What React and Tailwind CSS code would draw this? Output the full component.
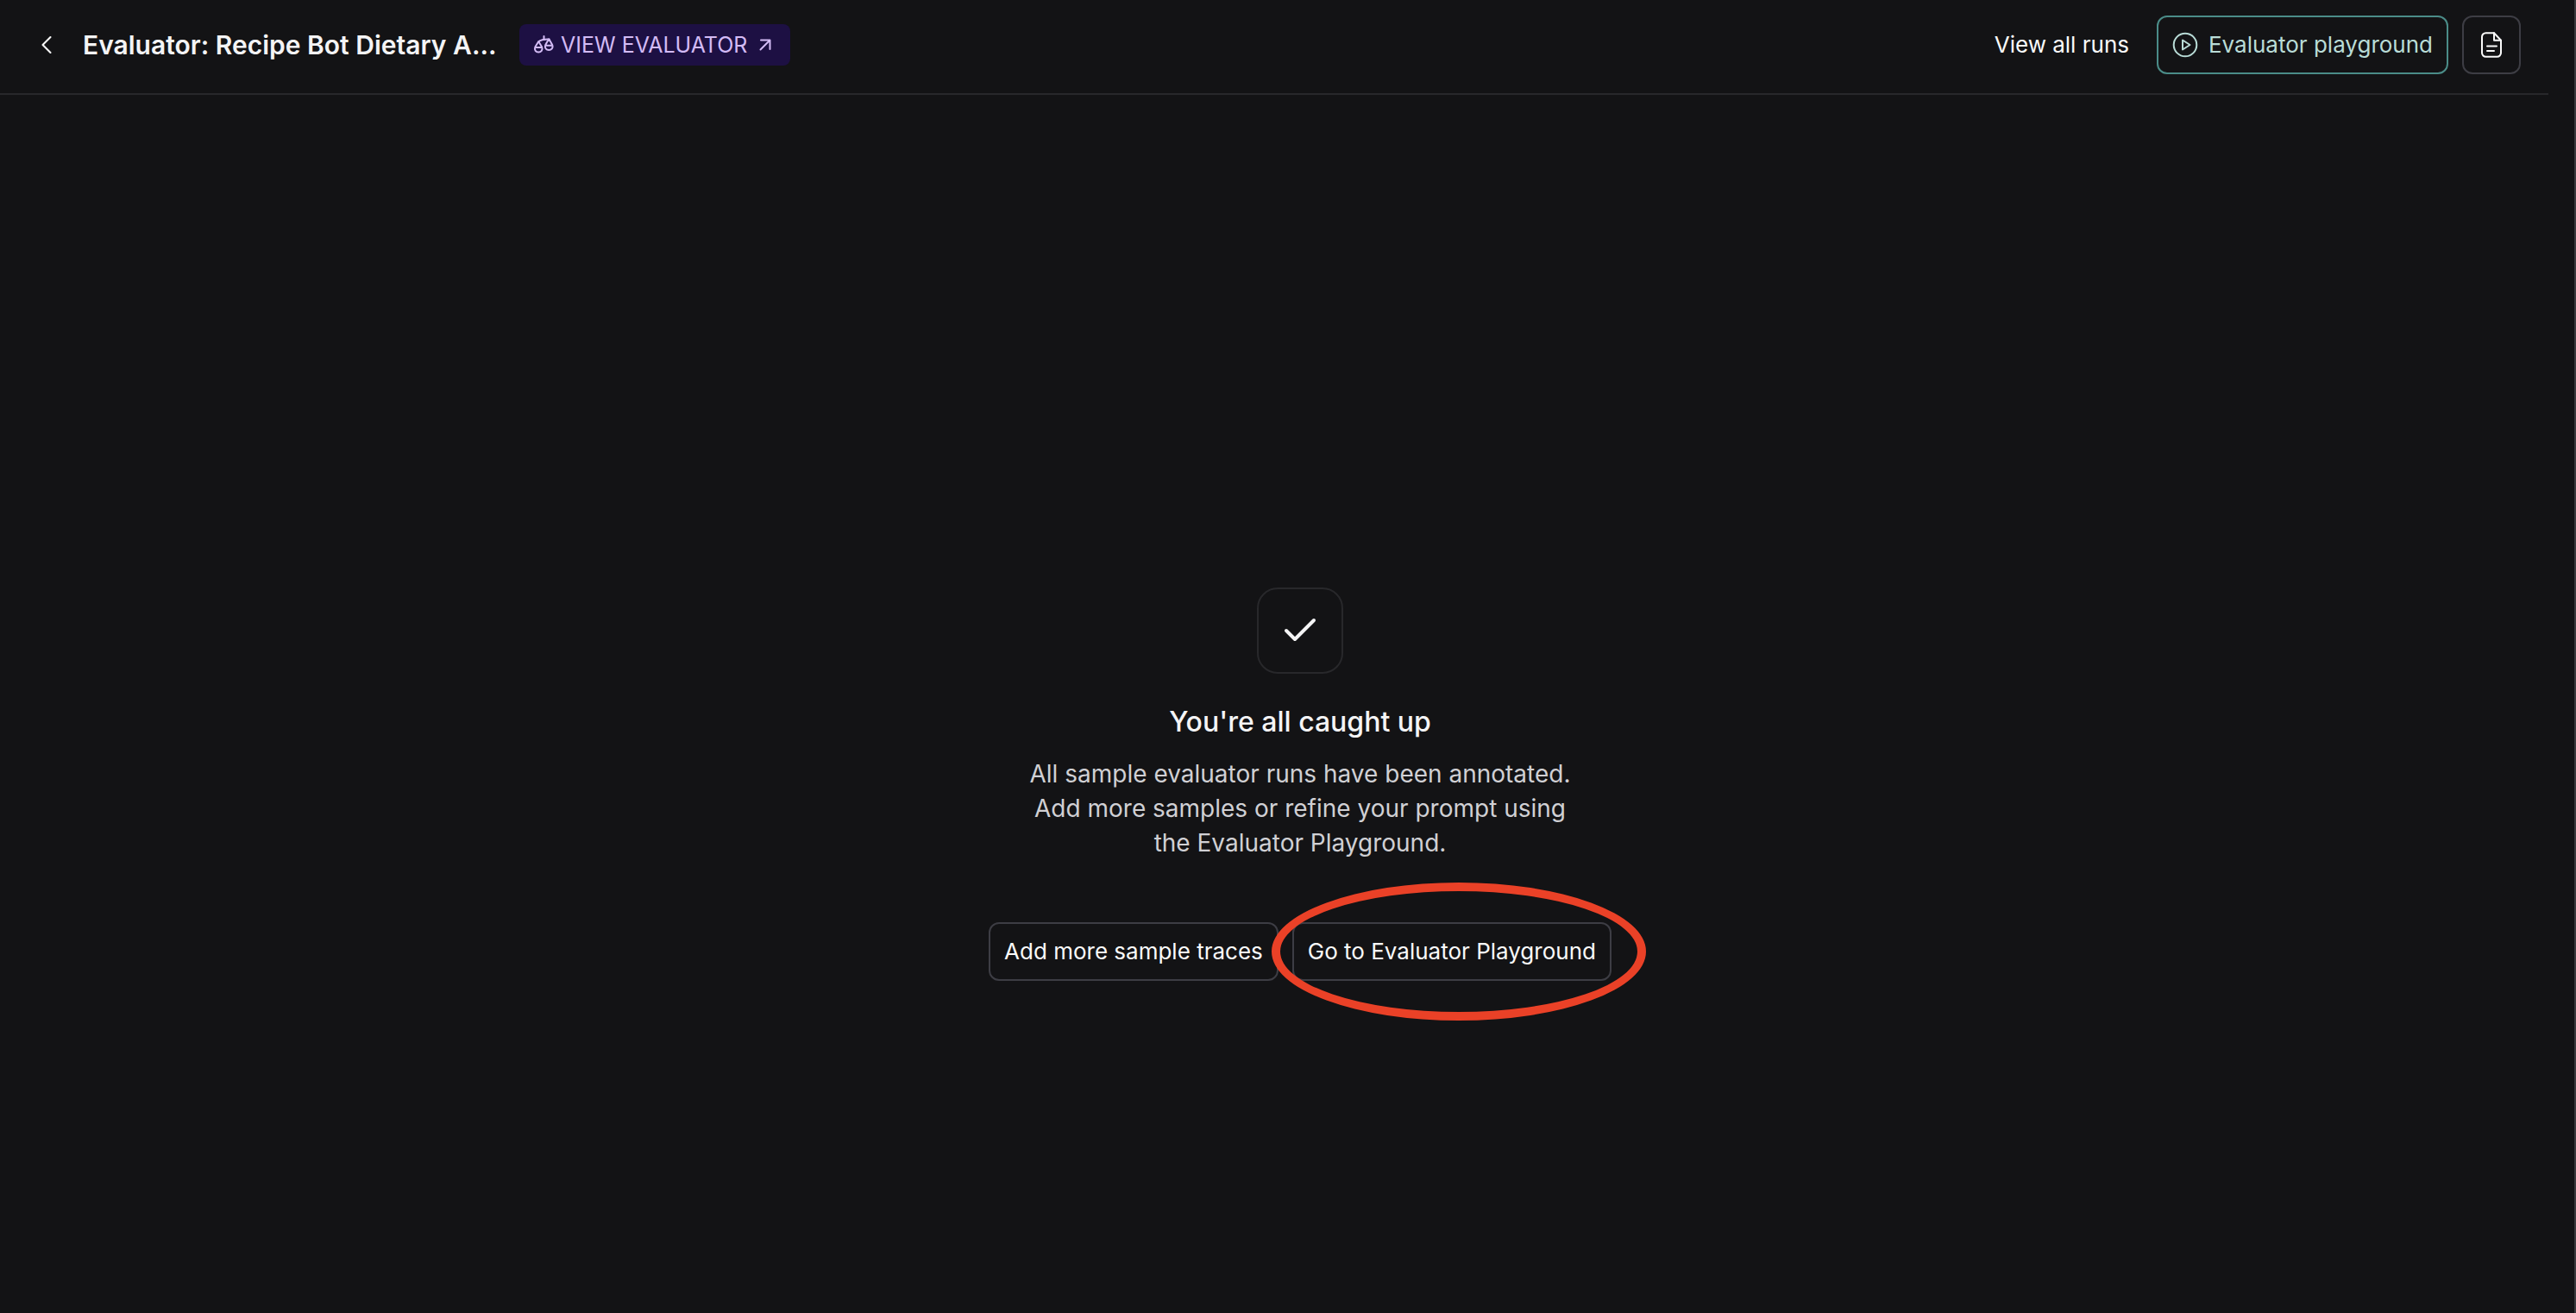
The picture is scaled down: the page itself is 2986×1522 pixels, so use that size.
import React from "react";
import { Check, ChevronLeft } from "lucide-react";

function ScalesIcon() {
  return (
    <svg width="24" height="24" viewBox="0 0 24 24" fill="none" stroke="currentColor" strokeWidth="2" strokeLinecap="round" strokeLinejoin="round" aria-hidden="true">
      <path d="M12.500 2v4" />
      <path d="M6 8.500C8 6.500 14 5 18.500 5.500" />
      <path d="M6 8.500 2.300 14.500C1 18 3.300 20.500 6.200 20.500S11.500 18 10.200 14.500L6.500 8.500M2.300 15h8" />
      <path d="M18 5.500 14.300 12C13 15.500 15.300 18 18.200 18S23.500 15.500 22.200 12L18.500 5.500M14.300 12.700h8" />
    </svg>
  );
}

function OpenArrowIcon() {
  return (
    <svg width="14" height="14" viewBox="0 0 14 14" fill="none" stroke="currentColor" strokeWidth="2" strokeLinecap="round" strokeLinejoin="round" aria-hidden="true">
      <path d="M1.500 12.500 12.500 1.500M2 1.500h10.500V12" />
    </svg>
  );
}

function PlayCircleIcon() {
  return (
    <svg width="30" height="30" viewBox="0 0 30 30" fill="none" stroke="currentColor" strokeWidth="2" strokeLinejoin="round" aria-hidden="true">
      <circle cx="15" cy="15" r="13.300" />
      <path d="M12 9.500v11l8.500-5.500z" />
    </svg>
  );
}

function DocumentIcon() {
  return (
    <svg width="24" height="30" viewBox="0 0 24 30" fill="none" stroke="currentColor" strokeWidth="2" strokeLinecap="round" strokeLinejoin="round" aria-hidden="true">
      <path d="M15 1.200H5.500A4.500 4.500 0 0 0 1 5.700v18.600a4.500 4.500 0 0 0 4.500 4.500h13a4.500 4.500 0 0 0 4.500-4.500V9.700z" />
      <path d="M15 1.200v8.500h8M7 16.500h11M7 22h8" />
    </svg>
  );
}

export default function App() {
  return (
    <div className="flex min-h-screen flex-col border-r-2 border-[#3a3a3d] bg-[#131315] pr-[30px] font-['Inter',sans-serif] text-[26px] leading-10 text-[#fafafa]">
      <header className="flex items-center justify-between border-b-2 border-[#28282b] pt-[18px] pr-8 pb-[22px] pl-9">
        <div className="flex items-center">
          <button type="button" aria-label="Back" className="flex size-9 items-center justify-center">
            <ChevronLeft size={36} strokeWidth={1.4} />
          </button>
          <h1 className="ml-6 w-[482px] text-[30px] font-semibold whitespace-nowrap text-[#f4f4f5]">
            Evaluator: Recipe Bot Dietary A...
          </h1>
          <a href="#evaluator" className="ml-6 flex h-12 items-center rounded-lg bg-[#1d1043] pr-[22px] pl-4 text-[25px] whitespace-nowrap text-[#d3bbf5]">
            <ScalesIcon />
            <span className="mr-[14px] ml-2">VIEW EVALUATOR</span>
            <OpenArrowIcon />
          </a>
        </div>
        <nav className="flex items-center gap-4 whitespace-nowrap">
          <a href="#runs" className="px-4">View all runs</a>
          <button type="button" className="flex h-[68px] items-center gap-3 rounded-xl border-2 border-[#4b8c88] px-4 text-[#b9dcd7]">
            <PlayCircleIcon />
            Evaluator playground
          </button>
          <button type="button" aria-label="Documentation" className="flex size-[68px] items-center justify-center rounded-xl border-2 border-[#3d3d44]">
            <DocumentIcon />
          </button>
        </nav>
      </header>

      <main className="flex flex-1 flex-col items-center justify-center pt-[186px] pl-15">
        <div className="flex size-[100px] items-center justify-center rounded-3xl border-2 border-[#28282b] text-[#f4f4f5]">
          <Check size={48} strokeWidth={2} />
        </div>
        <h2 className="mt-9 text-[32px] font-medium text-[#f4f4f5]">You're all caught up</h2>
        <p className="mt-5 w-[640px] text-center text-[28px] text-[#d0d0d4]">
          All sample evaluator runs have been annotated. Add more samples or refine your prompt using the Evaluator Playground.
        </p>
        <div className="mt-[72px] flex gap-4 whitespace-nowrap">
          <button type="button" className="h-[68px] rounded-xl border-2 border-[#3d3d44] px-4">
            Add more sample traces
          </button>
          <div className="relative">
            <button type="button" className="h-[68px] rounded-xl border-2 border-[#3d3d44] px-4">
              Go to Evaluator Playground
            </button>
            <div className="pointer-events-none absolute -inset-y-[46px] -right-10 -left-6 rounded-[50%] border-10 border-[#ea4127]" />
          </div>
        </div>
      </main>
    </div>
  );
}
